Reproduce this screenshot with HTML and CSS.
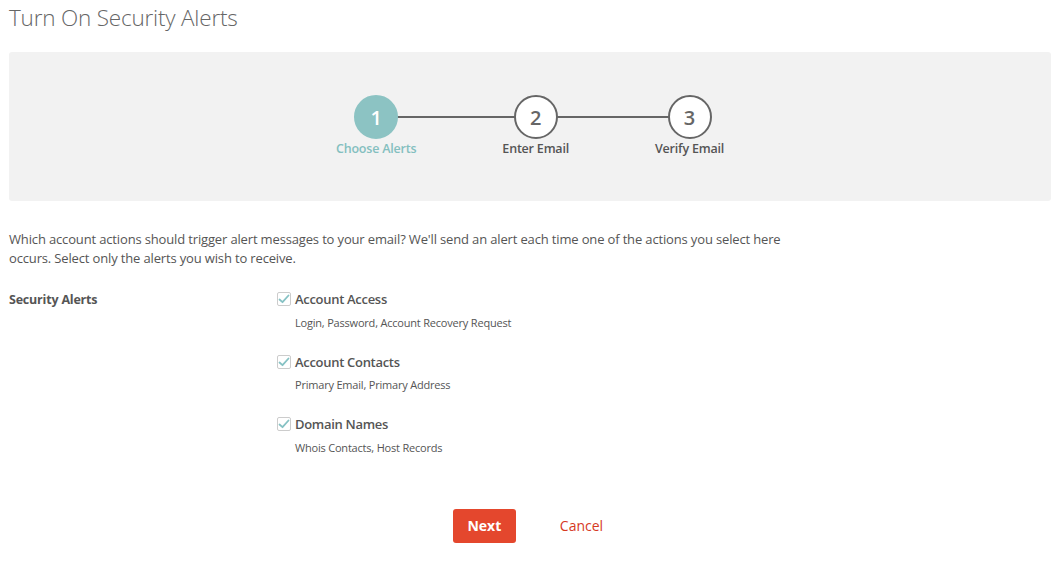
FILE: index.html
```html
<!DOCTYPE html>
<html>
<head>
<meta charset="utf-8">
<link rel="stylesheet" href="styles.css">
</head>
<body>
<div class="page">
  <h1 class="title">Turn On Security Alerts</h1>
  <div class="panel">
    <div class="steps">
      <div class="track"></div>
      <div class="step active">
        <div class="circle">1</div>
        <div class="label">Choose Alerts</div>
      </div>
      <div class="step">
        <div class="circle">2</div>
        <div class="label">Enter Email</div>
      </div>
      <div class="step">
        <div class="circle">3</div>
        <div class="label">Verify Email</div>
      </div>
    </div>
  </div>
  <p class="intro">Which account actions should trigger alert messages to your email? We'll send an alert each time one of the actions you select here occurs. Select only the alerts you wish to receive.</p>
  <div class="form-row">
    <div class="form-label">Security Alerts</div>
    <div class="options">
      <div class="option">
        <div class="check-line">
          <span class="box"><svg width="12" height="10" viewBox="0 0 12 10"><path d="M1.5 5.5 L4.5 8.2 L10.5 1.5" fill="none" stroke="#86c2c4" stroke-width="1.8" stroke-linecap="round" stroke-linejoin="round"/></svg></span>
          <span class="opt-title">Account Access</span>
        </div>
        <div class="opt-desc">Login, Password, Account Recovery Request</div>
      </div>
      <div class="option">
        <div class="check-line">
          <span class="box"><svg width="12" height="10" viewBox="0 0 12 10"><path d="M1.5 5.5 L4.5 8.2 L10.5 1.5" fill="none" stroke="#86c2c4" stroke-width="1.8" stroke-linecap="round" stroke-linejoin="round"/></svg></span>
          <span class="opt-title">Account Contacts</span>
        </div>
        <div class="opt-desc">Primary Email, Primary Address</div>
      </div>
      <div class="option">
        <div class="check-line">
          <span class="box"><svg width="12" height="10" viewBox="0 0 12 10"><path d="M1.5 5.5 L4.5 8.2 L10.5 1.5" fill="none" stroke="#86c2c4" stroke-width="1.8" stroke-linecap="round" stroke-linejoin="round"/></svg></span>
          <span class="opt-title">Domain Names</span>
        </div>
        <div class="opt-desc">Whois Contacts, Host Records</div>
      </div>
    </div>
  </div>
  <div class="actions">
    <button class="btn-next">Next</button>
    <a class="cancel">Cancel</a>
  </div>
</div>
</body>
</html>
```

FILE: styles.css
```css
* { box-sizing: border-box; }
html, body { margin: 0; padding: 0; background: #fff; }
body {
  font-family: "Open Sans", "Liberation Sans", sans-serif;
  color: #555;
}
.page {
  padding: 0 9px;
}
.title {
  margin: 0;
  padding-top: 2px;
  height: 52px;
  font-size: 22.5px;
  font-weight: 300;
  color: #666;
  letter-spacing: -0.2px;
}
.panel {
  background: #f2f2f2;
  border-radius: 3px;
  height: 149px;
  display: flex;
  justify-content: center;
  padding-top: 43px;
}
.steps {
  position: relative;
  display: flex;
  gap: 86px;
  height: 64px;
}
.track {
  position: absolute;
  top: 21px;
  left: 41px;
  right: 35px;
  height: 2px;
  background: #666;
}
.step {
  position: relative;
  display: flex;
  flex-direction: column;
  align-items: center;
}
.circle {
  width: 44px;
  height: 44px;
  border-radius: 50%;
  border: 2px solid #666;
  background: #fff;
  color: #666;
  font-size: 20px;
  font-weight: 600;
  display: flex;
  align-items: center;
  justify-content: center;
}
.step.active .circle {
  background: #8cc3c3;
  border-color: #8cc3c3;
  color: #fff;
}
.label {
  margin-top: 1px;
  font-size: 12.5px;
  font-weight: 600;
  color: #555;
  white-space: nowrap;
  letter-spacing: -0.2px;
}
.step.active .label { color: #84bfbf; }
.intro {
  margin: 29px 0 0;
  width: 780px;
  font-size: 13px;
  line-height: 19px;
  color: #555;
  letter-spacing: -0.15px;
}
.form-row {
  display: flex;
  margin-top: 22px;
}
.form-label {
  width: 268px;
  font-size: 12.5px;
  font-weight: 700;
  color: #555;
  padding-top: 1px;
  letter-spacing: -0.2px;
}
.options {
  display: flex;
  flex-direction: column;
  gap: 21px;
}
.option { height: 41.5px; }
.check-line {
  display: flex;
  align-items: center;
  gap: 4px;
}
.box {
  width: 14px;
  height: 14px;
  border: 1px solid #ccc;
  border-radius: 2px;
  background: #fff;
  display: flex;
  align-items: center;
  justify-content: center;
}
.opt-title {
  font-size: 13px;
  font-weight: 600;
  color: #555;
  letter-spacing: -0.3px;
}
.opt-desc {
  margin-top: 6.5px;
  margin-left: 18px;
  font-size: 11px;
  color: #555;
  letter-spacing: -0.2px;
}
.actions {
  display: flex;
  justify-content: center;
  align-items: center;
  gap: 44px;
  margin-top: 52px;
  margin-right: 4px;
}
.btn-next {
  width: 63px;
  height: 34px;
  border: none;
  border-radius: 3px;
  background: #e4472d;
  color: #fff;
  font-family: inherit;
  font-size: 14px;
  font-weight: 700;
}
.cancel {
  color: #d6391f;
  font-size: 14px;
  padding-bottom: 1px;
}
```
